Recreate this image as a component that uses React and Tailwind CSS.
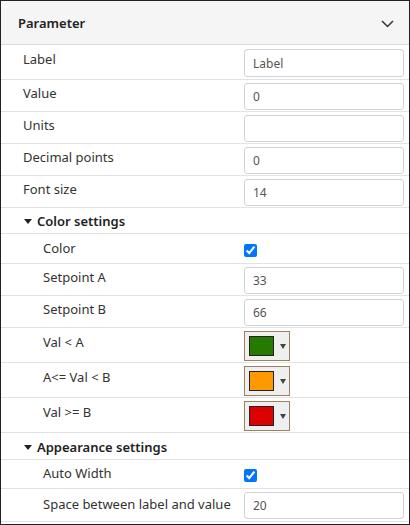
import React from "react";

const font = { fontFamily: '"Noto Sans", "Open Sans", sans-serif' };

function TextInput({ value, tall }) {
  return (
    <input
      type="text"
      defaultValue={value}
      className={
        "w-[160px] rounded-[3px] border border-[#cfd4d9] bg-white pl-[8px] text-[12px] text-[#555] outline-none " +
        (tall ? "mt-[4px] h-[28px]" : "mt-[3px] h-[27px]")
      }
      style={font}
    />
  );
}

function Row({ label, indent, h, pt, children }) {
  return (
    <div className={"flex items-start border-b border-[#e2e2e2] " + h}>
      <div className={"w-[243px] shrink-0 text-[13px] leading-[18px] text-[#333] " + (indent ? "pl-[42px] " : "pl-[22px] ") + pt}>
        {label}
      </div>
      <div className="flex-1">{children}</div>
    </div>
  );
}

function Section({ label, h, pt }) {
  return (
    <div className={"flex items-start border-b border-[#e2e2e2] pl-[23px] " + h + " " + pt}>
      <svg width="9" height="18" viewBox="0 0 9 18" className="shrink-0">
        <polygon points="0,7 8,7 4,12" fill="#222" />
      </svg>
      <span className="ml-[4px] text-[13px] font-semibold leading-[18px] text-[#222]">{label}</span>
    </div>
  );
}

function Check({ mt }) {
  return (
    <input type="checkbox" defaultChecked className={"block h-[13px] w-[13px] " + mt} />
  );
}

function ColorPick({ color }) {
  return (
    <div className="mt-[3px] flex h-[30px] w-[46px] items-center border border-[#9b7f62] bg-[#efefef] pl-[4px]">
      <div className="h-[20px] w-[25px] border border-[#222]" style={{ backgroundColor: color }} />
      <svg width="6" height="6" viewBox="0 0 6 6" className="ml-[6px]">
        <polygon points="0,1 6,1 3,6" fill="#444" />
      </svg>
    </div>
  );
}

export default function App() {
  return (
    <div className="h-[525px] w-[410px] border border-[#222] bg-white" style={font}>
      <div className="flex h-[44px] items-center justify-between border-b border-[#dcdcdc] bg-[#f5f5f5] pl-[17px] pr-[15px]">
        <span className="pt-[3px] text-[13px] font-semibold text-[#222]">Parameter</span>
        <svg width="13" height="8" viewBox="0 0 13 8" className="mt-[3px]">
          <path d="M1 1 L6.5 6.5 L12 1" fill="none" stroke="#333" strokeWidth="1.5" />
        </svg>
      </div>
      <Row label="Label" h="h-[35px]" pt="pt-[5px]"><TextInput value="Label" tall /></Row>
      <Row label="Value" h="h-[32px]" pt="pt-[4px]"><TextInput value="0" /></Row>
      <Row label="Units" h="h-[32px]" pt="pt-[4px]"><TextInput value="" /></Row>
      <Row label="Decimal points" h="h-[32px]" pt="pt-[4px]"><TextInput value="0" /></Row>
      <Row label="Font size" h="h-[32px]" pt="pt-[4px]"><TextInput value="14" /></Row>
      <Section label="Color settings" h="h-[26px]" pt="pt-[4px]" />
      <Row label="Color" indent h="h-[30px]" pt="pt-[5px]"><Check mt="mt-[10px]" /></Row>
      <Row label="Setpoint A" indent h="h-[32px]" pt="pt-[4px]"><TextInput value="33" /></Row>
      <Row label="Setpoint B" indent h="h-[32px]" pt="pt-[4px]"><TextInput value="66" /></Row>
      <Row label="Val < A" indent h="h-[35px]" pt="pt-[5px]"><ColorPick color="#267a00" /></Row>
      <Row label="A<= Val < B" indent h="h-[35px]" pt="pt-[5px]"><ColorPick color="#ff9900" /></Row>
      <Row label="Val >= B" indent h="h-[35px]" pt="pt-[5px]"><ColorPick color="#dd0000" /></Row>
      <Section label="Appearance settings" h="h-[27px]" pt="pt-[5px]" />
      <Row label="Auto Width" indent h="h-[29px]" pt="pt-[4px]"><Check mt="mt-[9px]" /></Row>
      <Row label="Space between label and value" indent h="h-[33px]" pt="pt-[6px]"><TextInput value="20" /></Row>
    </div>
  );
}
